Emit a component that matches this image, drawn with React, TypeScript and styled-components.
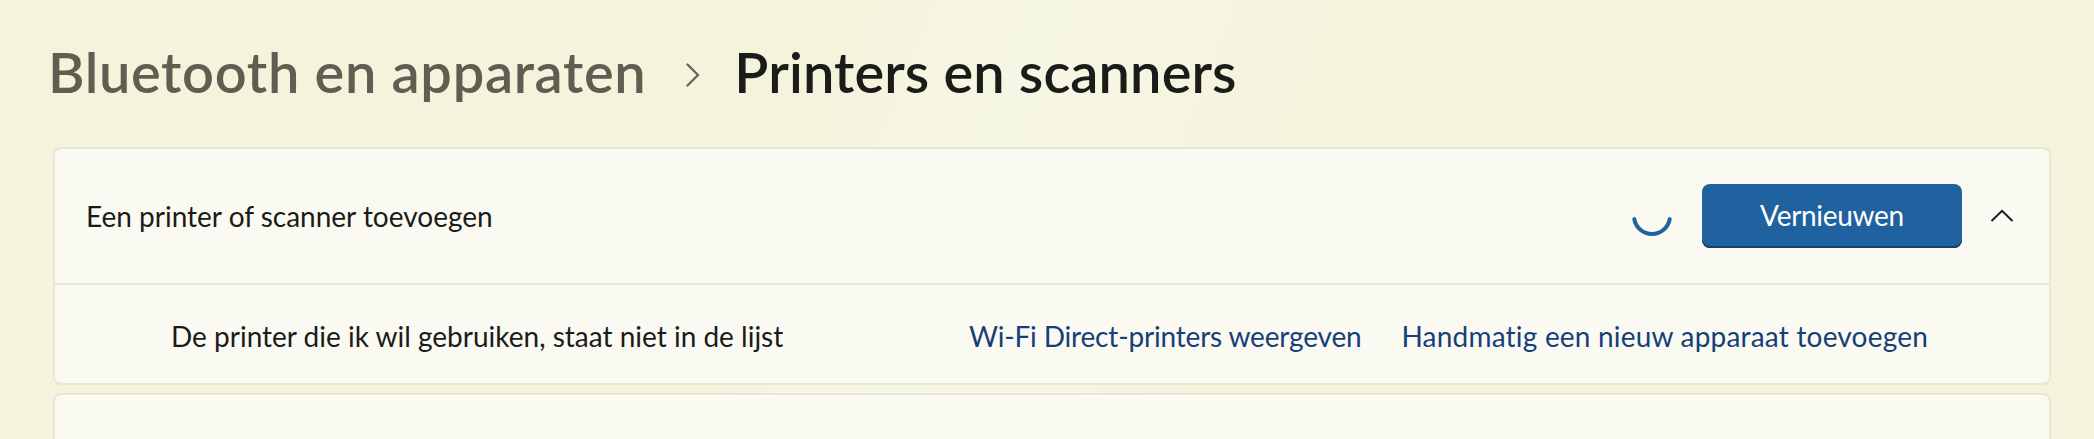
import React from "react";
import styled, { createGlobalStyle } from "styled-components";

const FONT = `"Lato", "Open Sans", sans-serif`;

const Global = createGlobalStyle`
  html, body { margin: 0; padding: 0; }
  body {
    background: #f4f4dd;
    font-family: ${FONT};
    overflow: hidden;
  }
`;

const Page = styled.div`
  height: 439px;
  box-sizing: border-box;
  padding: 44px 43px 0 53px;
  display: flex;
  flex-direction: column;
  background: linear-gradient(
    112deg,
    rgba(255, 255, 255, 0) 0%,
    rgba(255, 255, 255, 0) 38%,
    rgba(255, 255, 255, 0.22) 46%,
    rgba(255, 255, 255, 0) 60%,
    rgba(255, 255, 255, 0) 100%
  );
`;

const Header = styled.header`
  display: flex;
  align-items: center;
  height: 56px;
  margin: 0 0 47px -5px;
`;

const Crumb = styled.h1<{ $muted?: boolean }>`
  margin: 0;
  font-size: 56px;
  line-height: 56px;
  font-weight: 600;
  letter-spacing: ${(p) => (p.$muted ? "0.65px" : "0.1px")};
  color: ${(p) => (p.$muted ? "#5e5e52" : "#1b1b19")};
  white-space: nowrap;
`;

const CrumbSep = styled.span`
  display: flex;
  margin: 5px 34px 0 40px;
  color: #65655c;
`;

const Card = styled.section`
  background: #fafaf3;
  border: 2px solid #e7e7d5;
  border-radius: 8px;
  margin-bottom: 8px;
  flex-shrink: 0;
`;

const CardHeader = styled.div`
  height: 134px;
  display: flex;
  align-items: center;
  padding: 0 15px 0 31px;
`;

const CardBody = styled.div`
  height: 100px;
  box-sizing: border-box;
  display: flex;
  align-items: center;
  border-top: 2px solid #e7e7d5;
  padding: 4px 121px 0 116px;
`;

const Label = styled.span`
  font-size: 28px;
  line-height: 28px;
  color: #1b1b19;
  flex: 1;
  white-space: nowrap;
`;

const Actions = styled.div`
  display: flex;
  align-items: center;
`;

const Spinner = styled.svg`
  width: 44px;
  height: 44px;
  margin-right: 28px;
`;

const PrimaryButton = styled.button`
  width: 260px;
  height: 64px;
  border: none;
  border-radius: 8px;
  background: #2062a0;
  box-shadow: inset 0 -2px 0 #123f6c;
  color: #ffffff;
  font-family: ${FONT};
  font-size: 28px;
  letter-spacing: -0.3px;
  padding: 0 0 2px;
`;

const ExpandButton = styled.button`
  width: 64px;
  height: 64px;
  margin-left: 8px;
  border: none;
  background: transparent;
  display: flex;
  align-items: center;
  justify-content: center;
  padding: 0;
  color: #1b1b19;
`;

const Links = styled.div`
  display: flex;
  gap: 40px;
`;

const LinkText = styled.a<{ $track?: number }>`
  font-size: 28px;
  line-height: 28px;
  letter-spacing: ${(p) => p.$track ?? 0}px;
  color: #163f7a;
  text-decoration: none;
  white-space: nowrap;
`;

const EmptyCard = styled(Card)`
  height: 100px;
`;

export default function App() {
  return (
    <>
      <Global />
      <Page>
        <Header>
          <Crumb $muted>Bluetooth en apparaten</Crumb>
          <CrumbSep>
            <svg width="14" height="24" viewBox="0 0 14 24" fill="none">
              <polyline points="1.5,1.5 12,12 1.5,22.5" stroke="currentColor" strokeWidth="2.4" strokeLinecap="round" strokeLinejoin="round" />
            </svg>
          </CrumbSep>
          <Crumb>Printers en scanners</Crumb>
        </Header>
        <Card>
          <CardHeader>
            <Label>Een printer of scanner toevoegen</Label>
            <Actions>
              <Spinner viewBox="0 0 44 44">
                <path d="M 4.27 25.13 A 18 18 0 0 0 39.73 25.13" fill="none" stroke="#2062a0" strokeWidth="4" strokeLinecap="round" />
              </Spinner>
              <PrimaryButton>Vernieuwen</PrimaryButton>
              <ExpandButton aria-label="Samenvouwen">
                <svg width="24" height="14" viewBox="0 0 24 14" fill="none">
                  <polyline points="1.5,12 12,1.8 22.5,12" stroke="currentColor" strokeWidth="2" strokeLinejoin="miter" />
                </svg>
              </ExpandButton>
            </Actions>
          </CardHeader>
          <CardBody>
            <Label>De printer die ik wil gebruiken, staat niet in de lijst</Label>
            <Links>
              <LinkText href="#" $track={-0.17}>Wi-Fi Direct-printers weergeven</LinkText>
              <LinkText href="#" $track={0.2}>Handmatig een nieuw apparaat toevoegen</LinkText>
            </Links>
          </CardBody>
        </Card>
        <EmptyCard />
      </Page>
    </>
  );
}
